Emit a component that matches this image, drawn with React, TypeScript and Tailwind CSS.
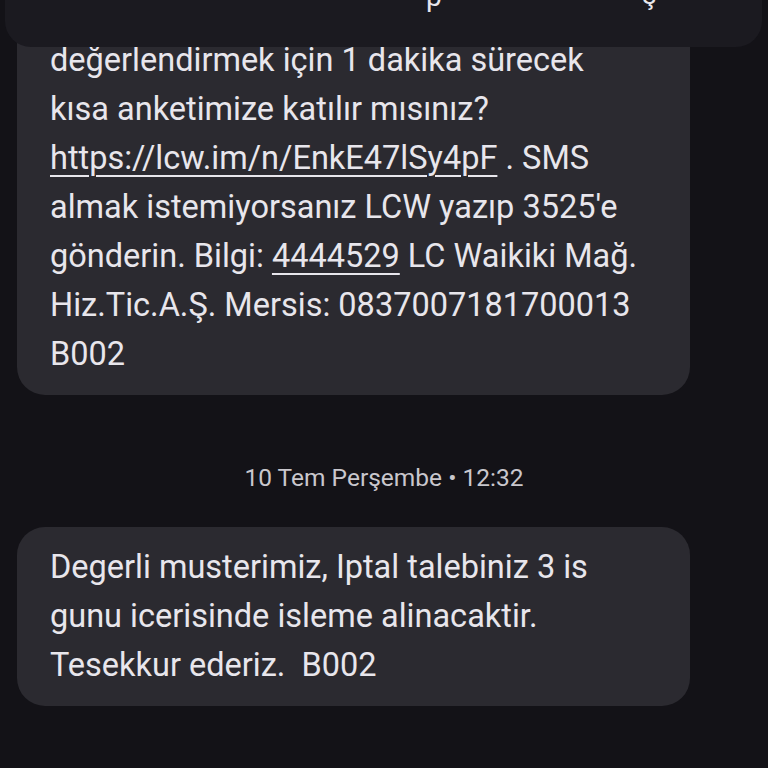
const bubbleOne = [
  <>değerlendirmek için 1 dakika sürecek</>,
  <>kısa anketimize katılır mısınız?</>,
  <>
    <a className="underline decoration-2 underline-offset-[6px]">https://lcw.im/n/EnkE47lSy4pF</a> . SMS
  </>,
  <>almak istemiyorsanız LCW yazıp 3525'e</>,
  <>
    gönderin. Bilgi: <a className="underline decoration-2 underline-offset-[6px]">4444529</a> LC Waikiki Mağ.
  </>,
  <>Hiz.Tic.A.Ş. Mersis: 0837007181700013</>,
  <>B002</>,
]

const bubbleTwo = [
  <>Degerli musterimiz, Iptal talebiniz 3 is</>,
  <>gunu icerisinde isleme alinacaktir.</>,
  <>Tesekkur ederiz.&nbsp; B002</>,
]

const Bubble = ({ lines, className }: { lines: React.ReactNode[]; className?: string }) => (
  <div
    className={`w-[673px] ml-[17px] rounded-[28px] bg-[#2b2a30] px-[33px] py-4 text-[32.5px] leading-[49px] text-[#e8e6ec] ${className ?? ""}`}
  >
    {lines.map((line, i) => (
      <div key={i} className="whitespace-nowrap">
        {line}
      </div>
    ))}
  </div>
)

export default function App() {
  return (
    <div
      className="relative h-[768px] w-[768px] overflow-hidden bg-[#131217]"
      style={{ fontFamily: "Roboto, 'Noto Sans', sans-serif" }}
    >
      <div className="flex flex-col">
        <Bubble lines={bubbleOne} className="-mt-[40px] pt-[76px]" />
        <div className="flex h-[132px] items-center justify-center pt-[34px] text-[24.5px] text-[#c9c7cd]">
          10 Tem Perşembe • 12:32
        </div>
        <Bubble lines={bubbleTwo} />
      </div>

      {/* top card sliding over the thread */}
      <div className="absolute left-[5px] right-[6px] top-0 h-[47px] overflow-hidden rounded-b-[26px] bg-[#1b1a20]">
        <div className="absolute left-[421px] -top-[24px] text-[28px] text-[#e8e6ec]">p</div>
        <div className="absolute left-[637px] -top-[26px] text-[28px] text-[#e8e6ec]">ş</div>
      </div>
    </div>
  )
}
